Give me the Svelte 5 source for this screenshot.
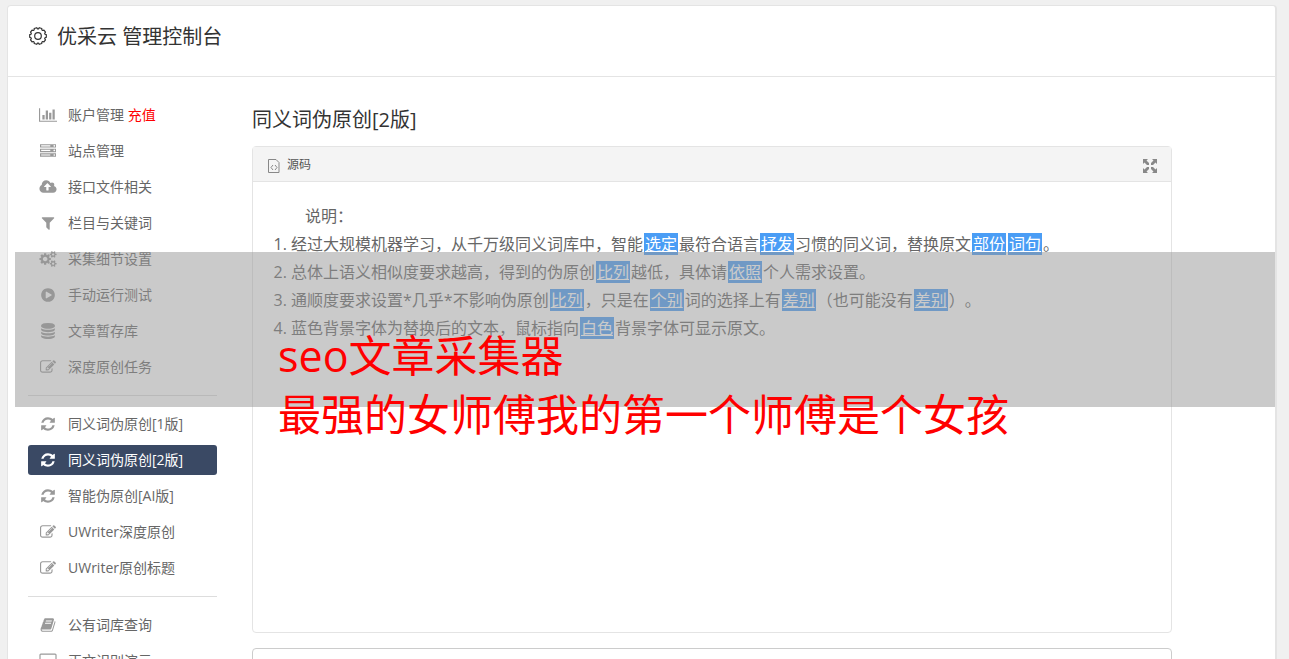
<script>
    const icons = {
        chart: { box: '0 0 2048 1792', width: 18, d: 'M640 896v512h-256v-512h256zm384-512v1024h-256v-1024h256zm1024 1152v128h-2048v-1536h128v1408h1920zm-640-896v768h-256v-768h256zm384-384v1152h-256v-1152h256z' },
        server: { box: '0 0 1792 1792', width: 16, d: 'M128 1408h1024v-128h-1024v128zm0-512h1024v-128h-1024v128zm1568 448q0-40-28-68t-68-28-68 28-28 68 28 68 68 28 68-28 28-68zm-1568-960h1024v-128h-1024v128zm1568 448q0-40-28-68t-68-28-68 28-28 68 28 68 68 28 68-28 28-68zm0-512q0-40-28-68t-68-28-68 28-28 68 28 68 68 28 68-28 28-68zm96 832v384h-1792v-384h1792zm0-512v384h-1792v-384h1792zm0-512v384h-1792v-384h1792z' },
        cloud: { box: '0 0 1920 1792', width: 18, d: 'M1280 864q0-14-9-23l-352-352q-9-9-23-9t-23 9l-351 351q-10 12-10 24 0 14 9 23t23 9h224v352q0 13 9.500 22.500t22.500 9.500h192q13 0 22.500-9.500t9.500-22.500v-352h224q13 0 22.500-9.500t9.500-22.500zm640 288q0 159-112.500 271.500t-271.500 112.500h-1088q-185 0-316.500-131.500t-131.500-316.500q0-130 70-240t188-165q-2-30-2-43 0-212 150-362t362-150q156 0 285.500 87t188.500 231q71-62 166-62 106 0 181 75t75 181q0 76-41 138 130 31 213.500 135.500t83.500 238.500z' },
        filter: { box: '0 0 1792 1792', width: 16, d: 'M1595 295q17 41-14 70l-493 493v742q0 42-39 59-13 5-25 5-27 0-45-19l-256-256q-19-19-19-45v-486l-493-493q-31-29-14-70 17-39 59-39h1280q42 0 59 39z' },
        cogs: { box: '0 0 1920 1792', width: 18, d: 'M896 896q0-106-75-181t-181-75-181 75-75 181 75 181 181 75 181-75 75-181zm768 512q0-52-38-90t-90-38-90 38-38 90q0 53 37.500 90.500t90.500 37.500 90.500-37.500 37.500-90.500zm0-1024q0-52-38-90t-90-38-90 38-38 90q0 53 37.500 90.500t90.500 37.500 90.500-37.500 37.500-90.500zm-384 421v185q0 10-7 19.500t-16 10.500l-155 24q-11 35-32 76 34 48 90 115 7 11 7 20 0 12-7 19-23 30-82.500 89.500t-78.500 59.500q-11 0-21-7l-115-90q-37 19-77 31-11 108-23 155-7 24-30 24h-186q-11 0-20-7.500t-10-17.500l-23-153q-34-10-75-31l-118 89q-7 7-20 7-11 0-21-8-144-133-144-160 0-9 7-19 10-14 41-53t47-61q-23-44-35-82l-152-24q-10-1-17-9.500t-7-19.500v-185q0-10 7-19.500t16-10.500l155-24q11-35 32-76-34-48-90-115-7-11-7-20 0-12 7-20 22-30 82-89t79-59q11 0 21 7l115 90q34-18 77-32 11-108 23-154 7-24 30-24h186q11 0 20 7.500t10 17.500l23 153q34 10 75 31l118-89q8-7 20-7 11 0 21 8 144 133 144 160 0 8-7 19-12 16-42 54t-45 60q23 48 34 82l152 23q10 2 17 10.500t7 19.500zm640 533v140q0 16-149 31-12 27-30 52 51 113 51 138 0 4-4 7-122 71-124 71-8 0-46-47t-52-68q-20 2-30 2t-30-2q-14 21-52 68t-46 47q-2 0-124-71-4-3-4-7 0-25 51-138-18-25-30-52-149-15-149-31v-140q0-16 149-31 13-29 30-52-51-113-51-138 0-4 4-7 4-2 35-20t59-34 30-16q8 0 46 46.500t52 67.500q20-2 30-2t30 2q51-71 92-112l6-2q4 0 124 70 4 3 4 7 0 25-51 138 17 23 30 52 149 15 149 31zm0-1024v140q0 16-149 31-12 27-30 52 51 113 51 138 0 4-4 7-122 71-124 71-8 0-46-47t-52-68q-20 2-30 2t-30-2q-14 21-52 68t-46 47q-2 0-124-71-4-3-4-7 0-25 51-138-18-25-30-52-149-15-149-31v-140q0-16 149-31 13-29 30-52-51-113-51-138 0-4 4-7 4-2 35-20t59-34 30-16q8 0 46 46.500t52 67.500q20-2 30-2t30 2q51-71 92-112l6-2q4 0 124 70 4 3 4 7 0 25-51 138 17 23 30 52 149 15 149 31z' },
        play: { box: '0 0 1792 1792', width: 16, d: 'M896 128q209 0 385.500 103t279.500 279.500 103 385.500-103 385.500-279.500 279.500-385.500 103-385.500-103-279.500-279.500-103-385.500 103-385.500 279.500-279.500 385.500-103zm384 823q32-18 32-55t-32-55l-544-320q-31-19-64-1-32 19-32 56v640q0 37 32 56 16 8 32 8 17 0 32-9z' },
        database: { box: '0 0 1792 1792', width: 16, d: 'M896 768q237 0 443-43t325-127v170q0 69-103 128t-280 93.500-385 34.500-385-34.500-280-93.500-103-128v-170q119 84 325 127t443 43zm0 768q237 0 443-43t325-127v170q0 69-103 128t-280 93.500-385 34.500-385-34.500-280-93.500-103-128v-170q119 84 325 127t443 43zm0-384q237 0 443-43t325-127v170q0 69-103 128t-280 93.500-385 34.500-385-34.500-280-93.500-103-128v-170q119 84 325 127t443 43zm0-1152q208 0 385 34.500t280 93.500 103 128v128q0 69-103 128t-280 93.500-385 34.500-385-34.500-280-93.500-103-128v-128q0-69 103-128t280-93.500 385-34.500z' },
        edit: { box: '0 0 1792 1792', width: 16, d: 'M888 1184l116-116-152-152-116 116v56h96v96h56zm440-720q-16-16-33 1l-350 350q-17 17-1 33t33-1l350-350q17-17 1-33zm80 594v190q0 119-84.500 203.500t-203.500 84.500h-832q-119 0-203.500-84.500t-84.500-203.500v-832q0-119 84.500-203.500t203.500-84.500h832q63 0 117 25 15 7 18 23 3 17-9 29l-49 49q-14 14-32 8-23-6-45-6h-832q-66 0-113 47t-47 113v832q0 66 47 113t113 47h832q66 0 113-47t47-113v-126q0-13 9-22l64-64q15-15 35-7t20 29zm-96-738l288 288-672 672h-288v-288zm444 132l-92 92-288-288 92-92q28-28 68-28t68 28l152 152q28 28 28 68t-28 68z' },
        refresh: { box: '0 0 1792 1792', width: 16, d: 'M1639 1056q0 5-1 7-64 268-268 434.500t-478 166.500q-146 0-282.500-55t-243.500-157l-129 129q-19 19-45 19t-45-19-19-45v-448q0-26 19-45t45-19h448q26 0 45 19t19 45-19 45l-137 137q71 66 161 102t187 36q134 0 250-65t186-179q11-17 53-117 8-23 30-23h192q13 0 22.500 9.500t9.500 22.500zm25-800v448q0 26-19 45t-45 19h-448q-26 0-45-19t-19-45 19-45l138-138q-148-137-349-137-134 0-250 65t-186 179q-11 17-53 117-8 23-30 23h-199q-13 0-22.500-9.500t-9.500-22.500v-7q65-268 270-434.500t480-166.500q146 0 284 55.500t245 156.500l130-129q19-19 45-19t45 19 19 45z' },
        book: { box: '0 0 1792 1792', width: 16, d: 'M1703 478q40 57 18 129l-275 906q-19 64-76.500 107.500t-122.500 43.500h-923q-77 0-148.500-53.500t-99.500-131.500q-24-67-2-127 0-4 3-27t4-37q1-8-3-21.500t-3-19.500q2-11 8-21t16.500-23.500 16.500-23.500q23-38 45-91.500t30-91.500q3-10 .5-30t-.5-28q3-11 17-28t17-23q21-36 42-92t25-90q1-9-2.500-32t.5-28q4-13 22-30.500t22-22.500q19-26 42.500-84.500t27.500-96.500q1-8-3-25.500t-2-26.500q2-8 9-18t18-23 17-21q8-12 16.500-30.500t15-35 16-36 19.500-32 26.500-23.500 36-11.500 47.500 5.500l-1 3q38-9 51-9h761q74 0 114 56t18 130l-274 906q-36 119-71.500 153.500t-128.500 34.500h-869q-27 0-38 15-11 16-1 43 24 70 144 70h923q29 0 56-15.500t35-41.500l300-987q7-22 5-57 38 15 59 43zm-1064 2q-4 13 2 22.500t20 9.500h608q13 0 25.500-9.500t16.500-22.500l21-64q4-13-2-22.500t-20-9.500h-608q-13 0-25.500 9.500t-16.500 22.500zm-83 256q-4 13 2 22.500t20 9.500h608q13 0 25.500-9.500t16.500-22.500l21-64q4-13-2-22.500t-20-9.500h-608q-13 0-25.500 9.500t-16.500 22.500z' },
        desktop: { box: '0 0 1920 1792', width: 18, d: 'M1792 1056v-832q0-13-9.500-22.500t-22.500-9.500h-1600q-13 0-22.500 9.500t-9.500 22.500v832q0 13 9.500 22.500t22.500 9.500h1600q13 0 22.500-9.500t9.500-22.500zm128-832v1088q0 66-47 113t-113 47h-544q0 37 16 77.500t32 71 16 43.500q0 26-19 45t-45 19h-512q-26 0-45-19t-19-45q0-14 16-44t32-70 16-78h-544q-66 0-113-47t-47-113v-1088q0-66 47-113t113-47h1600q66 0 113 47t47 113z' }
    };

    const menu = [
        [
            { icon: 'chart', text: '账户管理', extra: '充值' },
            { icon: 'server', text: '站点管理' },
            { icon: 'cloud', text: '接口文件相关' },
            { icon: 'filter', text: '栏目与关键词' },
            { icon: 'cogs', text: '采集细节设置' },
            { icon: 'play', text: '手动运行测试' },
            { icon: 'database', text: '文章暂存库' },
            { icon: 'edit', text: '深度原创任务' }
        ],
        [
            { icon: 'refresh', text: '同义词伪原创[1版]' },
            { icon: 'refresh', text: '同义词伪原创[2版]', active: true },
            { icon: 'refresh', text: '智能伪原创[AI版]' },
            { icon: 'edit', text: 'UWriter深度原创' },
            { icon: 'edit', text: 'UWriter原创标题' }
        ],
        [
            { icon: 'book', text: '公有词库查询' },
            { icon: 'desktop', text: '正文识别演示' }
        ]
    ];

    // odd parts are the replaced words
    const notes = [
        ['经过大规模机器学习，从千万级同义词库中，智能', '选定', '最符合语言', '抒发', '习惯的同义词，替换原文', '部份', '', '词句', '。'],
        ['总体上语义相似度要求越高，得到的伪原创', '比列', '越低，具体请', '依照', '个人需求设置。'],
        ['通顺度要求设置*几乎*不影响伪原创', '比列', '，只是在', '个别', '词的选择上有', '差别', '（也可能没有', '差别', '）。'],
        ['蓝色背景字体为替换后的文本，鼠标指向', '白色', '背景字体可显示原文。']
    ];

    // outline of the gear: ten rounded teeth around 10,10
    function gearPath() {
        const points = [];
        for (let i = 0; i < 10; i++) {
            for (const [shift, r] of [[-14, 7.2], [-9, 8.4], [9, 8.4], [14, 7.2]]) {
                const a = (i * 36 + shift) * Math.PI / 180;
                points.push((10 + r * Math.cos(a)).toFixed(2) + ' ' + (10 + r * Math.sin(a)).toFixed(2));
            }
        }
        return 'M' + points.join('L') + 'z';
    }
</script>

<div class="page">
    <div class="console">
        <header>
            <svg class="gear" viewBox="0 0 20 20" aria-hidden="true">
                <path d={gearPath()} />
                <circle cx="10" cy="10" r="3.3" />
            </svg>
            <h1>优采云 管理控制台</h1>
        </header>
        <div class="body">
            <nav>
                {#each menu as group}
                    <ul>
                        {#each group as item}
                            <li>
                                <a href="#top" class:active={item.active}>
                                    <span class="icon">
                                        <svg viewBox={icons[item.icon].box} width={icons[item.icon].width} height="16" aria-hidden="true">
                                            <path d={icons[item.icon].d} />
                                        </svg>
                                    </span>
                                    <span>{item.text}{#if item.extra}&nbsp;<span class="extra">{item.extra}</span>{/if}</span>
                                </a>
                            </li>
                        {/each}
                    </ul>
                {/each}
            </nav>
            <main>
                <h2>同义词伪原创[2版]</h2>
                <section class="editor">
                    <div class="toolbar">
                        <button class="source">
                            <svg width="12" height="14" viewBox="0 0 12 14" aria-hidden="true">
                                <path d="M.5 .5h7.500l3 3v10H.5z" />
                                <path d="M5 6L3 8.500l2 2.500M7 6l2 2.500L7 11" />
                            </svg>
                            源码
                        </button>
                        <button class="expand" aria-label="全屏">
                            <svg width="14" height="14" viewBox="0 0 14 14" aria-hidden="true">
                                <path d="M0 0h5L3.500 1.500L6 4v2H4L1.500 3.500L0 5zM14 0v5l-1.500-1.500L10 6H8V4l2.500-2.500L9 0zM0 14V9l1.500 1.500L4 8h2v2l-2.500 2.500L5 14zM14 14H9l1.500-1.500L8 10V8h2l2.500 2.500L14 9z" />
                            </svg>
                        </button>
                    </div>
                    <div class="content">
                        <p>说明：</p>
                        <ol>
                            {#each notes as parts}
                                <li>{#each parts as part, i}{#if i % 2}<u>{part}</u>{:else}{part}{/if}{/each}</li>
                            {/each}
                        </ol>
                    </div>
                </section>
                <section class="result"></section>
            </main>
        </div>
    </div>
    <div class="band"></div>
    <div class="caption">seo文章采集器<br />最强的女师傅我的第一个师傅是个女孩</div>
</div>

<style>
    :global(body) {
        margin: 0;
        background: #f0f0f0;
    }

    .page {
        position: relative;
        box-sizing: border-box;
        height: 100vh;
        padding: 5px 12px 0 7px;
        overflow: hidden;
        font-family: "Open Sans", "Noto Sans CJK SC", sans-serif;
        font-size: 14px;
        color: #666;
        text-spacing-trim: space-all;
    }

    .console {
        min-height: 100vh;
        border: 1px solid #e4e4e4;
        border-right-width: 2px;
        border-radius: 4px;
        background: #fff;
    }

    header {
        display: flex;
        align-items: center;
        gap: 9px;
        height: 62px;
        padding: 0 20px 8px;
        border-bottom: 1px solid #e4e4e4;
        color: #333;
    }

    .gear {
        width: 20px;
        height: 20px;
        margin-bottom: 2px;
        fill: none;
        stroke: #333;
        stroke-width: 1.2;
        stroke-linejoin: round;
    }

    h1, h2 {
        margin: 0;
        font-size: 20px;
        line-height: 28px;
        font-weight: 400;
        color: #333;
    }

    .body {
        display: flex;
        gap: 35px;
        padding: 23px 103px 0 20px;
    }

    nav {
        flex: 0 0 189px;
    }

    ul {
        display: flex;
        flex-direction: column;
        gap: 6px;
        margin: 0;
        padding: 0;
        list-style: none;
    }

    ul + ul {
        margin-top: 13px;
        padding-top: 13px;
        border-top: 1px solid #ddd;
    }

    nav a {
        display: flex;
        align-items: center;
        height: 30px;
        padding: 0 10px;
        border-radius: 3px;
        color: #666;
        line-height: 30px;
        text-decoration: none;
        white-space: nowrap;
    }

    nav a.active {
        background: #3a4964;
        color: #fff;
    }

    .icon {
        display: flex;
        justify-content: center;
        width: 20px;
        margin-right: 10px;
        color: #999;
    }

    .icon svg {
        fill: currentColor;
    }

    .active .icon {
        color: #fff;
    }

    .extra {
        color: #f00;
    }

    main {
        flex: 1;
        min-width: 0;
        padding-top: 6px;
    }

    .editor {
        margin-top: 12px;
        border: 1px solid #e4e4e4;
        border-radius: 4px;
    }

    .toolbar {
        display: flex;
        align-items: center;
        justify-content: space-between;
        height: 34px;
        padding: 0 14px 0 15px;
        border-bottom: 1px solid #e4e4e4;
        background: #f4f4f4;
    }

    button {
        display: flex;
        align-items: center;
        gap: 7px;
        padding: 0;
        border: 0;
        background: none;
        color: #555;
        font: inherit;
        font-size: 12px;
    }

    .source svg {
        margin-top: 3px;
        fill: none;
        stroke: #888;
    }

    .expand svg {
        margin-top: 4px;
        fill: #888;
    }

    .content {
        min-height: 430px;
        padding: 20px 20px 0;
        font-size: 16px;
        line-height: 28px;
    }

    p {
        margin: 0;
        padding-left: 32px;
    }

    ol {
        margin: 0;
        padding-left: 18px;
    }

    u {
        margin: 0 1px;
        padding: 0 1px;
        background: #4a9df5;
        color: #fff;
    }

    .result {
        height: 60px;
        margin-top: 15px;
        border: 1px solid #ccc;
        border-radius: 4px;
    }

    .band {
        position: absolute;
        top: 252px;
        right: 14px;
        left: 15px;
        height: 155px;
        background: rgba(150, 150, 150, 0.5);
    }

    .caption {
        position: absolute;
        top: 326px;
        left: 278px;
        color: #f00;
        font-size: 43px;
        line-height: 59px;
        white-space: nowrap;
    }
</style>
